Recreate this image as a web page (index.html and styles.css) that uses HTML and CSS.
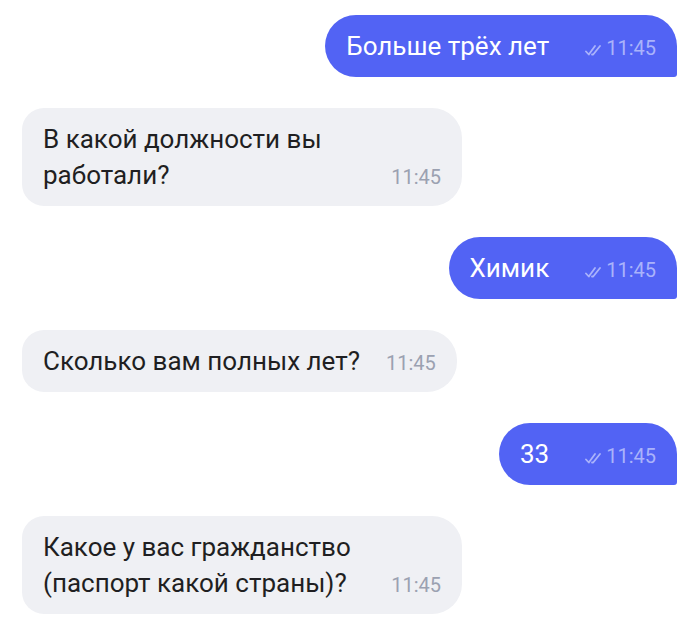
FILE: index.html
```html
<!DOCTYPE html>
<html lang="ru">
<head>
<meta charset="utf-8">
<link rel="stylesheet" href="styles.css">
</head>
<body>
<div class="chat">
  <div class="msg out">
    <div class="text">Больше трёх лет</div>
    <div class="meta"><svg class="check" viewBox="0 0 18 12" width="18" height="12"><path d="M1 7.5 L3.8 10.5 L10 2 M7 10.5 L8.2 10.5 L15 2" fill="none" stroke="currentColor" stroke-width="1.8" stroke-linecap="round" stroke-linejoin="round"/></svg><span class="time">11:45</span></div>
  </div>
  <div class="msg in">
    <div class="text">В какой должности вы работали?</div>
    <div class="meta"><span class="time">11:45</span></div>
  </div>
  <div class="msg out">
    <div class="text">Химик</div>
    <div class="meta"><svg class="check" viewBox="0 0 18 12" width="18" height="12"><path d="M1 7.5 L3.8 10.5 L10 2 M7 10.5 L8.2 10.5 L15 2" fill="none" stroke="currentColor" stroke-width="1.8" stroke-linecap="round" stroke-linejoin="round"/></svg><span class="time">11:45</span></div>
  </div>
  <div class="msg in">
    <div class="text">Сколько вам полных лет?</div>
    <div class="meta"><span class="time">11:45</span></div>
  </div>
  <div class="msg out">
    <div class="text">33</div>
    <div class="meta"><svg class="check" viewBox="0 0 18 12" width="18" height="12"><path d="M1 7.5 L3.8 10.5 L10 2 M7 10.5 L8.2 10.5 L15 2" fill="none" stroke="currentColor" stroke-width="1.8" stroke-linecap="round" stroke-linejoin="round"/></svg><span class="time">11:45</span></div>
  </div>
  <div class="msg in">
    <div class="text">Какое у вас гражданство (паспорт какой страны)?</div>
    <div class="meta"><span class="time">11:45</span></div>
  </div>
</div>
</body>
</html>
```

FILE: styles.css
```css
html, body {
  margin: 0;
  background: #ffffff;
}
body {
  font-family: Roboto, "Noto Sans", sans-serif;
  padding: 15px 23px 0 22px;
}
.chat {
  display: flex;
  flex-direction: column;
  gap: 31px;
}
.msg {
  display: flex;
  align-items: last baseline;
  max-width: 440px;
  box-sizing: border-box;
  padding: 13px 21px;
}
.msg .text {
  font-size: 26px;
  line-height: 36px;
  min-width: 0;
}
.msg .meta {
  display: flex;
  align-items: baseline;
  flex-shrink: 0;
  font-size: 20px;
  line-height: 20px;
  white-space: nowrap;
}
.out {
  align-self: flex-end;
  background: #5263f4;
  color: #ffffff;
  border-radius: 31px 31px 3px 31px;
  gap: 36px;
}
.out .meta {
  color: #aab3fb;
}
.out .check {
  margin-right: 3px;
  position: relative;
  top: 1px;
}
.in {
  align-self: flex-start;
  background: #eff0f4;
  color: #1f1f22;
  border-radius: 22px 30px 30px 22px;
  gap: 26px;
}
.in .meta {
  color: #9ba1b1;
}
```
